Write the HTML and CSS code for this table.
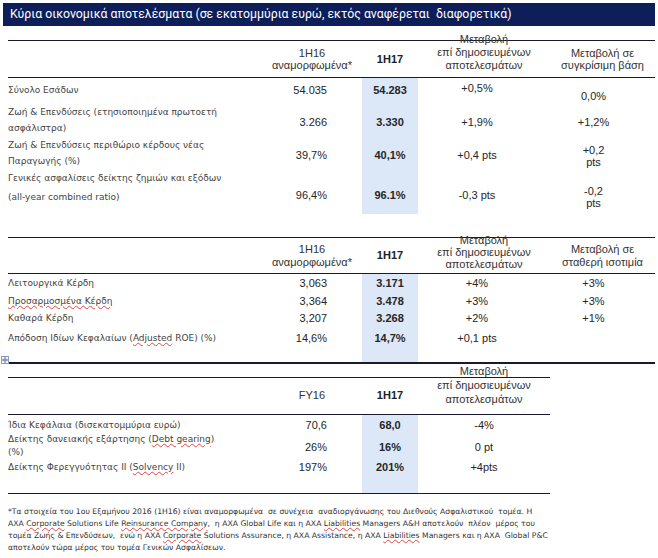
FILE: index.html
```html
<!DOCTYPE html>
<html lang="el">
<head>
  <meta charset="UTF-8">
  <meta name="viewport" content="width=device-width, initial-scale=1">
  <title>Κύρια οικονομικά αποτελέσματα</title>
  <link rel="stylesheet" href="styles.css">
</head>
<body>
  <div class="title-bar">Κύρια οικονομικά αποτελέσματα (σε εκατομμύρια ευρώ, εκτός αναφέρεται&nbsp; διαφορετικά)</div>

  <!-- Table 1: revenues -->
  <table class="fin fin-wide t1">
    <colgroup>
      <col class="c-label"><col class="c-prev"><col class="c-cur"><col class="c-chg"><col class="c-cmp">
    </colgroup>
    <tr class="head">
      <th></th>
      <th>1H16<br>αναμορφωμένα*</th>
      <th class="cur-head">1H17</th>
      <th><div class="lift">Μεταβολή<br>επί δημοσιευμένων<br>αποτελεσμάτων</div></th>
      <th>Μεταβολή σε<br>συγκρίσιμη βάση</th>
    </tr>
    <tr class="r1">
      <td class="label">Σύνολο Εσάδων</td>
      <td class="num">54.035</td>
      <td class="cur">54.283</td>
      <td class="chg up">+0,5%</td>
      <td class="cmp low">0,0%</td>
    </tr>
    <tr class="r2">
      <td class="label">Ζωή &amp; Επενδύσεις (ετησιοποιημένα πρωτοετή<br>ασφάλιστρα)</td>
      <td class="num">3.266</td>
      <td class="cur">3.330</td>
      <td class="chg">+1,9%</td>
      <td class="cmp">+1,2%</td>
    </tr>
    <tr class="r3">
      <td class="label">Ζωή &amp; Επενδύσεις περιθώριο κέρδους νέας<br>Παραγωγής (%)</td>
      <td class="num">39,7%</td>
      <td class="cur">40,1%</td>
      <td class="chg">+0,4 pts</td>
      <td class="cmp two">+0,2<br>pts</td>
    </tr>
    <tr class="r4">
      <td class="label">Γενικές ασφαλίσεις δείκτης ζημιών και εξόδων<br>(all-year combined ratio)</td>
      <td class="num">96,4%</td>
      <td class="cur">96.1%</td>
      <td class="chg">-0,3 pts</td>
      <td class="cmp two">-0,2<br>pts</td>
    </tr>
  </table>

  <!-- Table 2: earnings -->
  <div class="t2-wrap">
    <table class="fin fin-wide t2">
      <colgroup>
        <col class="c-label"><col class="c-prev"><col class="c-cur"><col class="c-chg"><col class="c-cmp">
      </colgroup>
      <tr class="head">
        <th></th>
        <th>1H16<br>αναμορφωμένα*</th>
        <th class="cur-head">1H17</th>
        <th><div class="lift">Μεταβολή<br>επί δημοσιευμένων<br>αποτελεσμάτων</div></th>
        <th>Μεταβολή σε<br>σταθερή ισοτιμία</th>
      </tr>
      <tr class="s1">
        <td class="label">Λειτουργικά Κέρδη</td>
        <td class="num">3,063</td>
        <td class="cur">3.171</td>
        <td class="chg">+4%</td>
        <td class="cmp">+3%</td>
      </tr>
      <tr class="s2">
        <td class="label"><span class="spell">Προσαρμοσμένα Κέρδη</span></td>
        <td class="num">3,364</td>
        <td class="cur">3.478</td>
        <td class="chg">+3%</td>
        <td class="cmp">+3%</td>
      </tr>
      <tr class="s3">
        <td class="label">Καθαρά Κέρδη</td>
        <td class="num">3,207</td>
        <td class="cur">3.268</td>
        <td class="chg">+2%</td>
        <td class="cmp">+1%</td>
      </tr>
      <tr class="s4">
        <td class="label">Απόδοση Ιδίων Κεφαλαίων (<span class="spell">Adjusted</span> ROE) (%)</td>
        <td class="num">14,6%</td>
        <td class="cur">14,7%</td>
        <td class="chg">+0,1 pts</td>
        <td class="cmp"></td>
      </tr>
    </table>
    <svg class="move-handle" width="8" height="8" viewBox="0 0 8 8">
      <rect x="0.5" y="0.5" width="7" height="7" fill="#fff" stroke="#8a9cc4"/>
      <path d="M4 1.5v5M1.5 4h5M3 2.5l1-1 1 1M3 5.5l1 1 1-1M2.5 3l-1 1 1 1M5.5 3l1 1-1 1" fill="none" stroke="#3a4f8c" stroke-width="0.7"/>
    </svg>
  </div>

  <!-- Table 3: balance sheet -->
  <table class="fin fin-narrow t3">
    <colgroup>
      <col class="c-label"><col class="c-prev"><col class="c-cur"><col class="c-chg">
    </colgroup>
    <tr class="head">
      <th></th>
      <th class="fy">FY16</th>
      <th class="cur-head">1H17</th>
      <th><div class="lift lift-big">Μεταβολή<br>επί δημοσιευμένων<br>αποτελεσμάτων</div></th>
    </tr>
    <tr class="b1">
      <td class="label">Ίδια Κεφάλαια (δισεκατομμύρια ευρώ)</td>
      <td class="num">70,6</td>
      <td class="cur">68,0</td>
      <td class="chg">-4%</td>
    </tr>
    <tr class="b2">
      <td class="label">Δείκτης δανειακής εξάρτησης (<span class="spell">Debt gearing</span>)<br>(%)</td>
      <td class="num">26%</td>
      <td class="cur">16%</td>
      <td class="chg">0 pt</td>
    </tr>
    <tr class="b3">
      <td class="label">Δείκτης Φερεγγυότητας II (<span class="spell">Solvency</span> II)</td>
      <td class="num">197%</td>
      <td class="cur">201%</td>
      <td class="chg">+4pts</td>
    </tr>
  </table>

  <p class="footnote">
    *Τα στοιχεία του 1ου Εξαμήνου 2016 (1Η16) είναι αναμορφωμένα&nbsp; σε συνέχεια&nbsp; αναδιοργάνωσης του Διεθνούς Ασφαλιστικού&nbsp; τομέα. Η<br>
    AXA <span class="spell">Corporate</span> Solutions Life <span class="spell">Reinsurance Company</span>,&nbsp; η AXA Global Life και η AXA <span class="spell">Liabilities</span> Managers A&amp;H αποτελούν&nbsp; πλέον&nbsp; μέρος του<br>
    τομέα Ζωής &amp; Επενδύσεων,&nbsp; ενώ η AXA <span class="spell">Corporate</span> Solutions Assurance, η AXA Assistance, η AXA <span class="spell">Liabilities</span> Managers και η AXA&nbsp; Global P&amp;C<br>
    αποτελούν τώρα μέρος του τομέα Γενικών Ασφαλίσεων.
  </p>
</body>
</html>
```

FILE: styles.css
```css
/* Base */
* {
  box-sizing: border-box;
}
body {
  margin: 0;
  width: 658px;
  background: #fff;
  color: #262626;
  font-family: 'Liberation Sans', Arial, sans-serif;
}

/* Title */
.title-bar {
  margin: 3px 3px 0 3px;
  height: 23px;
  padding-left: 7px;
  background: #0d1e58;
  color: #fff;
  font-family: Roboto, 'Noto Sans', sans-serif;
  font-size: 12.3px;
  line-height: 23px;
  white-space: nowrap;
}

/* Tables */
.fin {
  border-collapse: collapse;
  table-layout: fixed;
  margin-left: 8px;
  font-size: 11px;
}
.fin-wide {
  width: 647px;
}
.fin-narrow {
  width: 542px;
}
.c-label { width: 254px; }
.c-prev { width: 100px; }
.c-cur { width: 56px; }
.c-chg { width: 132px; }
.c-cmp { width: 105px; }

.fin th {
  font-weight: normal;
  color: #333;
  line-height: 12.5px;
  text-align: center;
  vertical-align: middle;
  padding: 0;
}
.fin .head {
  border-top: 1px solid #1a1a2e;
  border-bottom: 1px solid #1a1a2e;
}
.fin th.cur-head {
  font-weight: bold;
  color: #222;
}
.lift {
  line-height: 13px;
  margin-top: -14px;
}
.t2 .lift {
  line-height: 12px;
  margin-top: -8px;
}
.lift-big {
  line-height: 14px;
  margin-top: -21px;
}
.fin th.fy {
  text-align: right;
  padding-right: 37px;
}

.fin td {
  padding: 0;
  vertical-align: top;
  line-height: 16px;
  white-space: nowrap;
}
.fin td.label {
  font-family: 'DejaVu Sans', Tahoma, sans-serif;
  font-size: 9px;
  color: #444;
}
.fin td.num {
  text-align: right;
  padding-right: 35px;
}
.fin td.cur {
  background: #dce8f8;
  font-weight: bold;
  text-align: center;
}
.fin td.chg {
  text-align: center;
  padding-right: 14px;
}
.fin td.cmp {
  text-align: center;
  padding-right: 18px;
}
.fin td.two {
  line-height: 12px;
}

.spell {
  text-decoration: underline wavy #e04848;
  text-decoration-thickness: 1px;
  text-underline-offset: 1px;
}

/* Table 1 rows */
.t1 { margin-top: 14px; }
.t1 .head { height: 37px; }
.t1 .r1 { height: 24px; }
.t1 .r1 td { padding-top: 4px; }
.t1 .r1 td.up { padding-top: 2px; }
.t1 .r1 td.low { padding-top: 10px; }
.t1 .r2 { height: 33px; }
.t1 .r2 td { padding-top: 10px; }
.t1 .r2 td.label { padding-top: 0; }
.t1 .r3 { height: 32px; }
.t1 .r3 td { padding-top: 10px; }
.t1 .r3 td.label { padding-top: 0; }
.t1 .r3 td.two { padding-top: 7px; }
.t1 .r4 { height: 45px; }
.t1 .r4 td { padding-top: 18px; }
.t1 .r4 td.label { padding-top: 0; line-height: 19px; }
.t1 .r4 td.two { padding-top: 16px; }

/* Table 2 rows */
.t2-wrap {
  position: relative;
  margin-top: 23px;
}
.t2 .head { height: 36px; }
.t2 .s1 { height: 19px; }
.t2 .s1 td { padding-top: 1px; }
.t2 .s2 { height: 17px; }
.t2 .s3 { height: 18px; }
.t2 .s4 { height: 35px; }
.t2 .s4 td { padding-top: 2px; }
.t2 {
  border-bottom: 2px solid #1a1a2e;
}
.move-handle {
  position: absolute;
  left: 1px;
  bottom: 0;
}

/* Table 3 rows */
.t3 { margin-top: 13px; }
.t3 .head { height: 37px; }
.t3 .b1 { height: 19px; }
.t3 .b1 td { padding-top: 2px; }
.t3 .b2 { height: 26px; }
.t3 .b2 td { padding-top: 6px; }
.t3 .b2 td.label { padding-top: 0; line-height: 13px; }
.t3 .b3 { height: 34px; }
.t3 .b3 td { padding-top: 0; }
.t3 {
  border-bottom: 1px solid #1a1a2e;
}
.t3 td.chg {
  padding-right: 0;
}

/* Footnote */
.footnote {
  margin: 12px 0 0 8px;
  font-family: 'DejaVu Sans', Tahoma, sans-serif;
  font-size: 7.7px;
  line-height: 12.3px;
  color: #333;
  white-space: nowrap;
}
```
